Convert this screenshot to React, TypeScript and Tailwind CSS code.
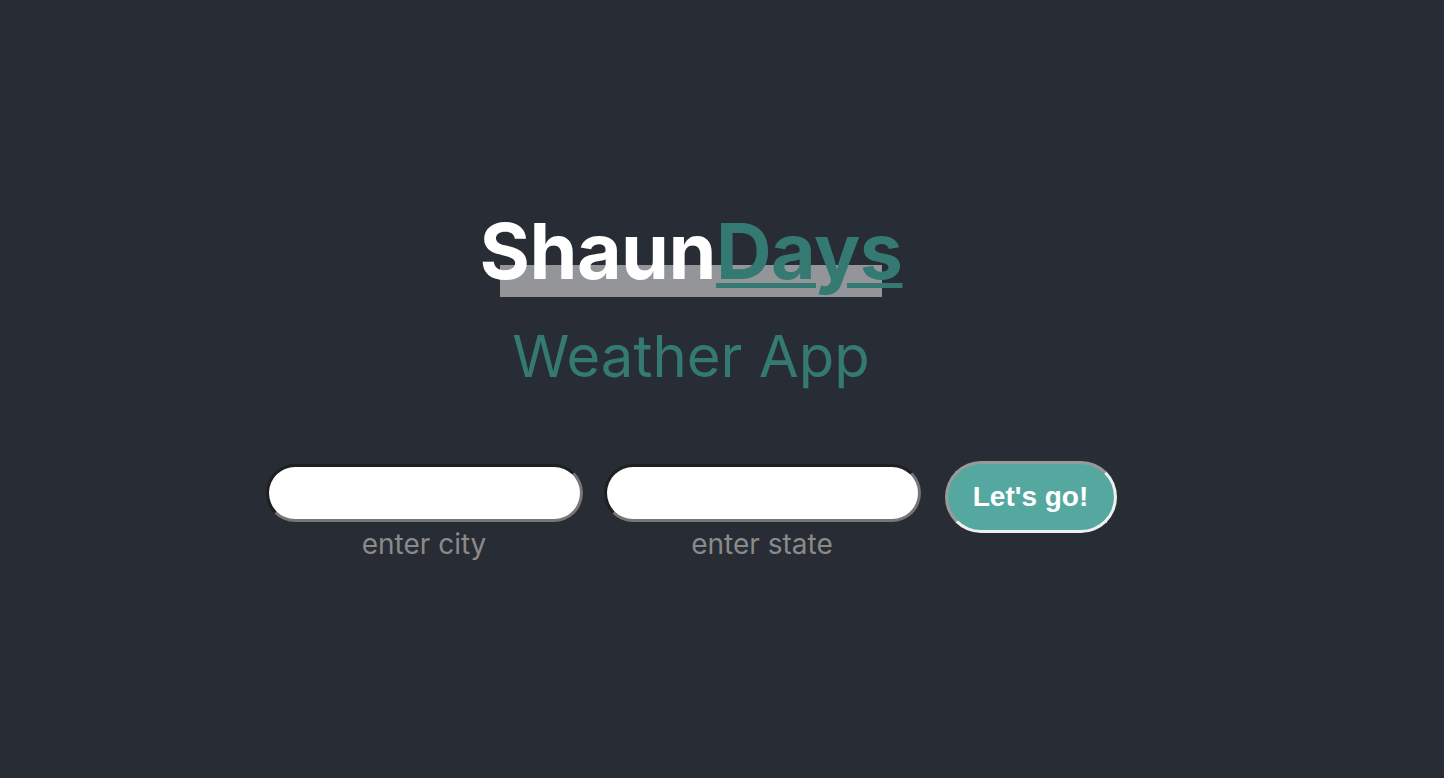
export default function App() {
  return (
    <div className="flex min-h-screen items-center justify-center bg-[#282c34] pb-[6px] pr-[62px] font-['Inter',sans-serif]">
      <div className="flex flex-col items-center">
        <h1 className="relative text-[77px] font-bold leading-none tracking-[-0.5px] text-white">
          <span className="absolute left-[20px] right-[20px] top-[52px] h-[32px] bg-[#939598]" />
          <span className="relative">Shaun</span>
          <span className="relative text-[#357a72] underline decoration-[5px] underline-offset-[4px]">Days</span>
        </h1>
        <p className="mt-[37px] text-[58px] font-normal leading-none text-[#357a72]">Weather App</p>
        <div className="mt-[79px] flex items-start">
          <div className="flex flex-col items-center">
            <input
              type="text"
              className="h-[58px] w-[317px] rounded-full border-[3px] border-t-[#1f1f1f] border-l-[#1f1f1f] border-b-[#767676] border-r-[#767676] bg-white px-4 outline-none"
            />
            <span className="mt-[6px] text-[28px] leading-[32px] text-[#8a8a8a]">enter city</span>
          </div>
          <div className="ml-[21px] flex flex-col items-center">
            <input
              type="text"
              className="h-[58px] w-[317px] rounded-full border-[3px] border-t-[#1f1f1f] border-l-[#1f1f1f] border-b-[#767676] border-r-[#767676] bg-white px-4 outline-none"
            />
            <span className="mt-[6px] text-[28px] leading-[32px] text-[#8a8a8a]">enter state</span>
          </div>
          <button
            type="button"
            className="-mt-[3px] ml-[24px] h-[72px] w-[172px] rounded-full border-[3px] border-t-[#9a9a9a] border-l-[#9a9a9a] border-b-[#efefef] border-r-[#efefef] bg-[#55a8a0] font-['Liberation_Sans',Arial,sans-serif] text-[28px] font-bold text-white"
          >
            Let's go!
          </button>
        </div>
      </div>
    </div>
  );
}
